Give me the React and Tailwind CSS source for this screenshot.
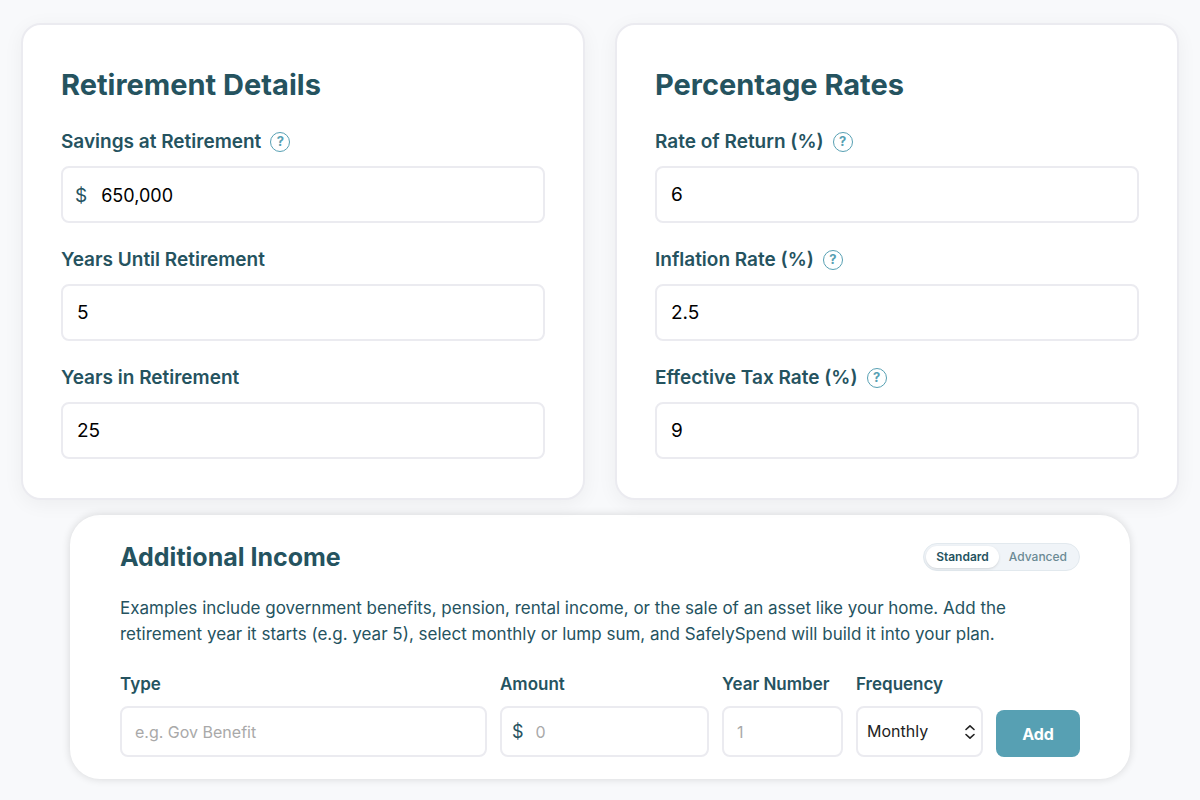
import React, { useState } from "react";

const HelpIcon = ({ label }) => (
  <button
    type="button"
    aria-label={`Help: ${label}`}
    className="flex h-5 w-5 cursor-pointer items-center justify-center rounded-full border border-[#57a0b3] text-[13px] leading-none font-bold text-[#57a0b3]"
  >
    ?
  </button>
);

const Field = ({ id, label, help, prefix, value, onChange }) => (
  <div className="flex flex-col gap-[10px]">
    <div className="flex items-center gap-[9px]">
      <label htmlFor={id} className="text-[19px] leading-[29px] font-semibold">
        {label}
      </label>
      {help && <HelpIcon label={label} />}
    </div>
    <div
      className={`flex h-[57px] items-center rounded-lg border-2 border-[#ebebf0] bg-white pt-[2px] focus-within:border-[#57a0b3] ${
        prefix ? "px-3 text-lg" : "px-[14px] text-[19px]"
      }`}
    >
      {prefix && <span className="mr-[14px] text-[19px]">{prefix}</span>}
      <input
        id={id}
        type="text"
        inputMode="decimal"
        value={value}
        onChange={(e) => onChange(id, e.target.value)}
        className="w-full min-w-0 bg-transparent text-black outline-none"
      />
    </div>
  </div>
);

const Card = ({ title, children }) => (
  <section className="flex flex-col gap-[22px] rounded-[20px] border-2 border-[#ebebf0] bg-white px-[38px] pt-10 pb-[39px] shadow-[0_4px_20px_rgba(0,0,0,0.05)]">
    <h2 className="text-[29px] leading-10 font-bold">{title}</h2>
    {children}
  </section>
);

const labelClass = "text-[17px] leading-[26px] font-semibold";
const boxClass =
  "h-[51px] w-full min-w-0 rounded-lg border-2 border-[#ebebf0] bg-white text-base text-[#222] outline-none placeholder:text-[#a9a9a9]";

const App = () => {
  const [values, setValues] = useState({
    savings: "650,000",
    yearsUntil: "5",
    yearsIn: "25",
    returnRate: "6",
    inflation: "2.5",
    taxRate: "9",
  });
  const [mode, setMode] = useState("Standard");

  const handleChange = (id, value) => {
    setValues((prev) => ({ ...prev, [id]: value }));
  };

  return (
    <main className="min-h-screen bg-[#f8f9fb] px-[21px] pt-[23px] pb-5 font-['Inter',sans-serif] text-[#25535f]">
      <div className="grid grid-cols-1 gap-[30px] md:grid-cols-2">
        <Card title="Retirement Details">
          <Field id="savings" label="Savings at Retirement" help prefix="$" value={values.savings} onChange={handleChange} />
          <Field id="yearsUntil" label="Years Until Retirement" value={values.yearsUntil} onChange={handleChange} />
          <Field id="yearsIn" label="Years in Retirement" value={values.yearsIn} onChange={handleChange} />
        </Card>
        <Card title="Percentage Rates">
          <Field id="returnRate" label="Rate of Return (%)" help value={values.returnRate} onChange={handleChange} />
          <Field id="inflation" label="Inflation Rate (%)" help value={values.inflation} onChange={handleChange} />
          <Field id="taxRate" label="Effective Tax Rate (%)" help value={values.taxRate} onChange={handleChange} />
        </Card>
      </div>

      <section className="mx-auto mt-[15px] max-w-[1060px] rounded-[30px] bg-white px-[50px] pt-6 pb-[22px] shadow-[0_0_8px_rgba(0,0,0,0.14)]">
        <div className="flex items-center justify-between">
          <h2 className="text-[25px] leading-9 font-bold">Additional Income</h2>
          <div className="flex rounded-full border border-[#e2e9ee] bg-[#f0f4f8] p-[2px] text-xs leading-[22px]">
            {["Standard", "Advanced"].map((item) => (
              <button
                key={item}
                type="button"
                aria-pressed={mode === item}
                onClick={() => setMode(item)}
                className={
                  mode === item
                    ? "rounded-full bg-white px-[10px] font-semibold shadow-sm"
                    : "rounded-full px-[10px] font-medium text-[#6b8a94]"
                }
              >
                {item}
              </button>
            ))}
          </div>
        </div>

        <p className="mt-5 max-w-[900px] text-[17px] leading-[26px]">
          Examples include government benefits, pension, rental income, or the sale of an asset like your home. Add the
          retirement year it starts (e.g. year 5), select monthly or lump sum, and SafelySpend will build it into your plan.
        </p>

        <form
          onSubmit={(e) => e.preventDefault()}
          className="mt-6 flex flex-wrap items-end gap-[13px] md:flex-nowrap"
        >
          <div className="flex min-w-0 flex-1 flex-col gap-[9px]">
            <label htmlFor="incomeType" className={labelClass}>Type</label>
            <input id="incomeType" type="text" placeholder="e.g. Gov Benefit" className={`${boxClass} px-[13px]`} />
          </div>
          <div className="flex w-[209px] flex-col gap-[9px]">
            <label htmlFor="amount" className={labelClass}>Amount</label>
            <div className={`${boxClass} flex items-center px-[10px]`}>
              <span className="mr-3 text-lg text-[#25535f]">$</span>
              <input
                id="amount"
                type="text"
                inputMode="decimal"
                placeholder="0"
                className="w-full min-w-0 bg-transparent outline-none placeholder:text-[#a9a9a9]"
              />
            </div>
          </div>
          <div className="flex w-[121px] flex-col gap-[9px]">
            <label htmlFor="yearNumber" className={labelClass}>Year Number</label>
            <input id="yearNumber" type="text" inputMode="numeric" placeholder="1" className={`${boxClass} px-[13px]`} />
          </div>
          <div className="flex w-[127px] flex-col gap-[9px]">
            <label htmlFor="frequency" className={labelClass}>Frequency</label>
            <div className="grid items-center">
              <select id="frequency" className={`${boxClass} col-start-1 row-start-1 appearance-none px-[9px] pb-[2px]`}>
                <option>Monthly</option>
                <option>Lump Sum</option>
              </select>
              <svg
                viewBox="0 0 12 16"
                className="pointer-events-none col-start-1 row-start-1 mr-[7px] h-4 w-3 justify-self-end"
                fill="none"
                stroke="#222"
                strokeWidth="1.6"
                strokeLinecap="round"
                strokeLinejoin="round"
              >
                <path d="M2 5.5l4-3.7 4 3.7M2 10.5l4 3.7 4-3.7" />
              </svg>
            </div>
          </div>
          <button type="submit" className="h-[47px] w-[84px] rounded-lg bg-[#57a0b3] text-base font-bold text-white">
            Add
          </button>
        </form>
      </section>
    </main>
  );
};

export default App;
